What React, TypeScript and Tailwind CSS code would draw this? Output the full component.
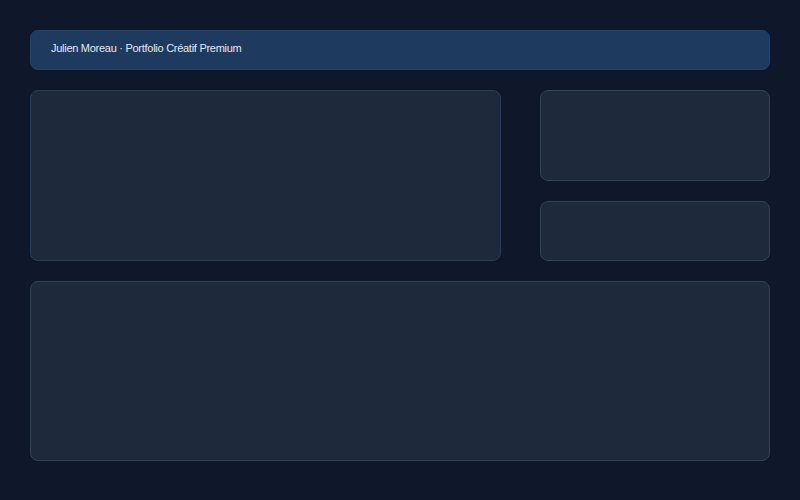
export default function App() {
  return (
    <div className="w-[800px] h-[500px] bg-[#0f172a] p-[30px] flex flex-col gap-5 font-['Liberation_Sans',sans-serif]">
      <header className="h-10 shrink-0 rounded-lg bg-[#1e3a5f] border border-[#24436b] flex items-center px-5 pb-[3px]">
        <p className="whitespace-nowrap text-[11px] leading-none text-[#e2e8f0] tracking-tight">
          Julien Moreau · Portfolio Créatif Premium
        </p>
      </header>

      <div className="flex gap-[39px] h-[170.5px] shrink-0">
        <section className="w-[471px] rounded-lg bg-[#1e293b] border border-[#2a3b57]" />
        <div className="flex-1 flex flex-col gap-5">
          <section className="h-[90.5px] rounded-lg bg-[#1e293b] border border-[#334155]" />
          <section className="flex-1 rounded-lg bg-[#1e293b] border border-[#334155]" />
        </div>
      </div>

      <section className="h-[180.5px] shrink-0 rounded-lg bg-[#1e293b] border border-[#334155]" />
    </div>
  );
}
